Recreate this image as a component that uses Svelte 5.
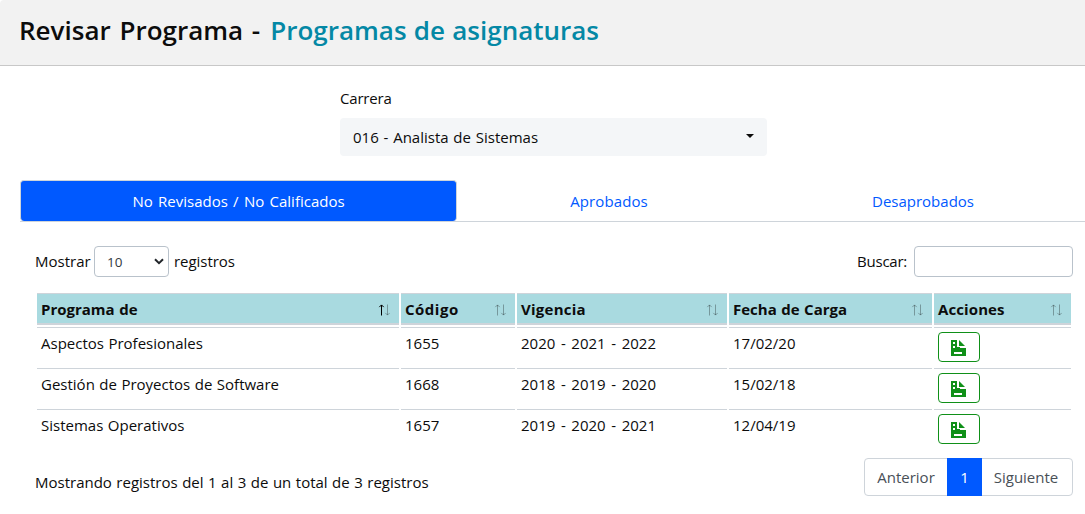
<script>
  const columns = [
    { label: 'Programa de', cls: 'c1', asc: true },
    { label: 'Código', cls: 'c2' },
    { label: 'Vigencia', cls: 'c3' },
    { label: 'Fecha de Carga', cls: 'c4' },
    { label: 'Acciones', cls: 'c5' }
  ];
  const rows = [
    { name: 'Aspectos Profesionales', code: '1655', years: '2020 - 2021 - 2022', date: '17/02/20' },
    { name: 'Gestión de Proyectos de Software', code: '1668', years: '2018 - 2019 - 2020', date: '15/02/18' },
    { name: 'Sistemas Operativos', code: '1657', years: '2019 - 2020 - 2021', date: '12/04/19' }
  ];
</script>

<div class="page">
  <header><h1><span class="lead">Revisar Programa -</span><span class="accent">Programas de asignaturas</span></h1></header>

  <section class="career">
    <div class="label">Carrera</div>
    <div class="picker"><span>016 - Analista de Sistemas</span><i class="caret"></i></div>
  </section>

  <nav class="tabs">
    <div class="tab active"><span>No Revisados / No Calificados</span></div>
    <div class="tab second"><span>Aprobados</span></div>
    <div class="tab third"><span>Desaprobados</span></div>
  </nav>

  <div class="content">
    <div class="tools">
      <div class="length">
        <span class="show">Mostrar</span>
        <div class="count"><span>10</span>
          <svg width="10" height="7" viewBox="0 0 10 7"><path d="M1 1.2 5 5.1 9 1.2" fill="none" stroke="#212529" stroke-width="2" /></svg>
        </div>
        <span class="regs">registros</span>
      </div>
      <div class="search"><span>Buscar:</span><input type="text" aria-label="Buscar" /></div>
    </div>

    <table>
      <thead>
        <tr>
          {#each columns as c}
            <th class={c.cls}>
              <div class="head"><span>{c.label}</span>
                <svg class="sort" width="12" height="12" viewBox="0 0 12 12" fill="none" stroke="#000">
                  <path class:on={c.asc} class="arrow" d="M3.5 11.5V1M1.3 3.1 3.5.9 5.7 3.1" />
                  <path class="arrow" d="M9.5 .5V11M7.3 8.9 9.5 11.1 11.7 8.9" />
                </svg>
              </div>
            </th>
          {/each}
        </tr>
      </thead>
      <tbody>
        {#each rows as r}
          <tr>
            <td>{r.name}</td>
            <td>{r.code}</td>
            <td class="years">{r.years}</td>
            <td>{r.date}</td>
            <td>
              <button aria-label="Ver programa">
                <svg width="15" height="16" viewBox="0 0 15 16" fill="#0f9018" shape-rendering="crispEdges">
                  <path fill-rule="evenodd" d="M0 0H6V7H9V8H14.5V16H0ZM2 2V4H4V2ZM2 6V8H4V6ZM3 12V14H11V12Z" />
                  <path d="M8 0 14 6H8Z" shape-rendering="auto" />
                </svg>
              </button>
            </td>
          </tr>
        {/each}
      </tbody>
    </table>

    <footer>
      <div class="info">Mostrando registros del 1 al 3 de un total de 3 registros</div>
      <div class="pager">
        <div class="prev">Anterior</div><div class="current">1</div><div class="next">Siguiente</div>
      </div>
    </footer>
  </div>
</div>

<style>
  :global(body) { background: #fff; }
  .page, .page * { box-sizing: border-box; }
  .page {
    width: 1085px; height: 514px; overflow: hidden; color: #0c0c0c;
    font: 15px/24px "Open Sans", "Noto Sans", sans-serif; word-spacing: .6px;
  }
  header {
    height: 66px; padding: 11px 20px 0 19px; background: #f2f2f2;
    border-bottom: 1px solid #c8c8c8; border-top-left-radius: 4px;
  }
  h1 { margin: 0; font-size: 26px; line-height: 38px; font-weight: 600; white-space: nowrap; }
  .lead { word-spacing: 2px; }
  .accent { margin-left: 10px; color: #0488a5; word-spacing: .5px; }
  .career { width: 427px; margin: 20px 0 0 340px; }
  .label { letter-spacing: -.2px; }
  .picker {
    display: flex; align-items: center; justify-content: space-between; height: 38px;
    margin-top: 8px; padding: 0 13px; border-radius: 4px; background: #f4f6f8; word-spacing: .9px;
  }
  .caret { border: 4.8px solid transparent; border-top-color: #0c0c0c; border-bottom: 0; margin-bottom: 2px; }
  .tabs { display: flex; height: 42px; margin: 24px 0 0 20px; border-bottom: 1px solid #ced4da; }
  .tab { flex: none; height: 41px; padding-top: 9px; text-align: center; color: #0059ff; white-space: nowrap; }
  .active { width: 437px; color: #fff; background: #0059ff; border: 1px solid #ced4da; border-bottom: 0; border-radius: 4px; padding-top: 8px; word-spacing: 1.4px; }
  .second { width: 304px; letter-spacing: .1px; }
  .third { width: 324px; }
  .content { padding: 24px 12px 0 35px; }
  .tools { display: flex; justify-content: space-between; height: 31px; }
  .length, .search { display: flex; align-items: center; }
  .count {
    display: flex; align-items: center; justify-content: space-between; width: 75px; height: 31px;
    margin: 0 5px 0 4px; padding: 0 4px 0 12px; border: 1px solid #b9c2cb; border-radius: 4px;
    font-size: 13.5px; color: #343a40;
  }
  .show { width: 55px; white-space: nowrap; }
  .show, .regs, .search span { margin-bottom: 2px; }
  .regs { letter-spacing: -.05px; }
  .search span { margin-right: 7px; letter-spacing: -.25px; }
  input { width: 159px; height: 31px; border: 1px solid #b9c2cb; border-radius: 4px; background: #fff; }
  table { width: 1038px; margin-top: 14px; table-layout: fixed; border-collapse: separate; border-spacing: 2px; }
  .c1 { width: 362px; }
  .c2 { width: 114px; letter-spacing: .5px; }
  .c3 { width: 210px; letter-spacing: .25px; }
  .c4 { width: 203px; }
  .c5 { width: 137px; letter-spacing: .1px; }
  th {
    height: 32px; padding: 4px 4px; background: #a9dae0; text-align: left; font-weight: 700;
    border-top: 1px solid #ced4da; border-bottom: 2px solid #ced4da;
  }
  .head { display: flex; align-items: center; justify-content: space-between; height: 21px; padding-right: 5px; white-space: nowrap; }
  .sort { margin-top: 2px; }
  .arrow { opacity: .3; }
  .arrow.on { opacity: 1; }
  td { height: 39px; padding: 3px 4px 4px; vertical-align: top; border-top: 1px solid #ced4da; white-space: nowrap; }
  .years { word-spacing: 1.7px; }
  button {
    display: flex; align-items: center; justify-content: center; width: 42px; height: 30px;
    margin: 1px 0 0; padding: 1px 1px 0 0; border: 1px solid #0f9018; border-radius: 4px; background: #fff;
  }
  footer { display: flex; justify-content: space-between; height: 38px; margin-top: 8px; }
  .info { padding-top: 12px; }
  .pager {
    display: flex; width: 209px; height: 38px; border: 1px solid #ced4da; border-radius: 4px;
    color: #495057; line-height: 37px; text-align: center;
  }
  .prev { width: 82px; }
  .current { width: 35px; height: 38px; margin-top: -1px; line-height: 39px; color: #fff; background: #0059ff; }
  .next { flex: 1; padding-right: 2px; }
</style>
